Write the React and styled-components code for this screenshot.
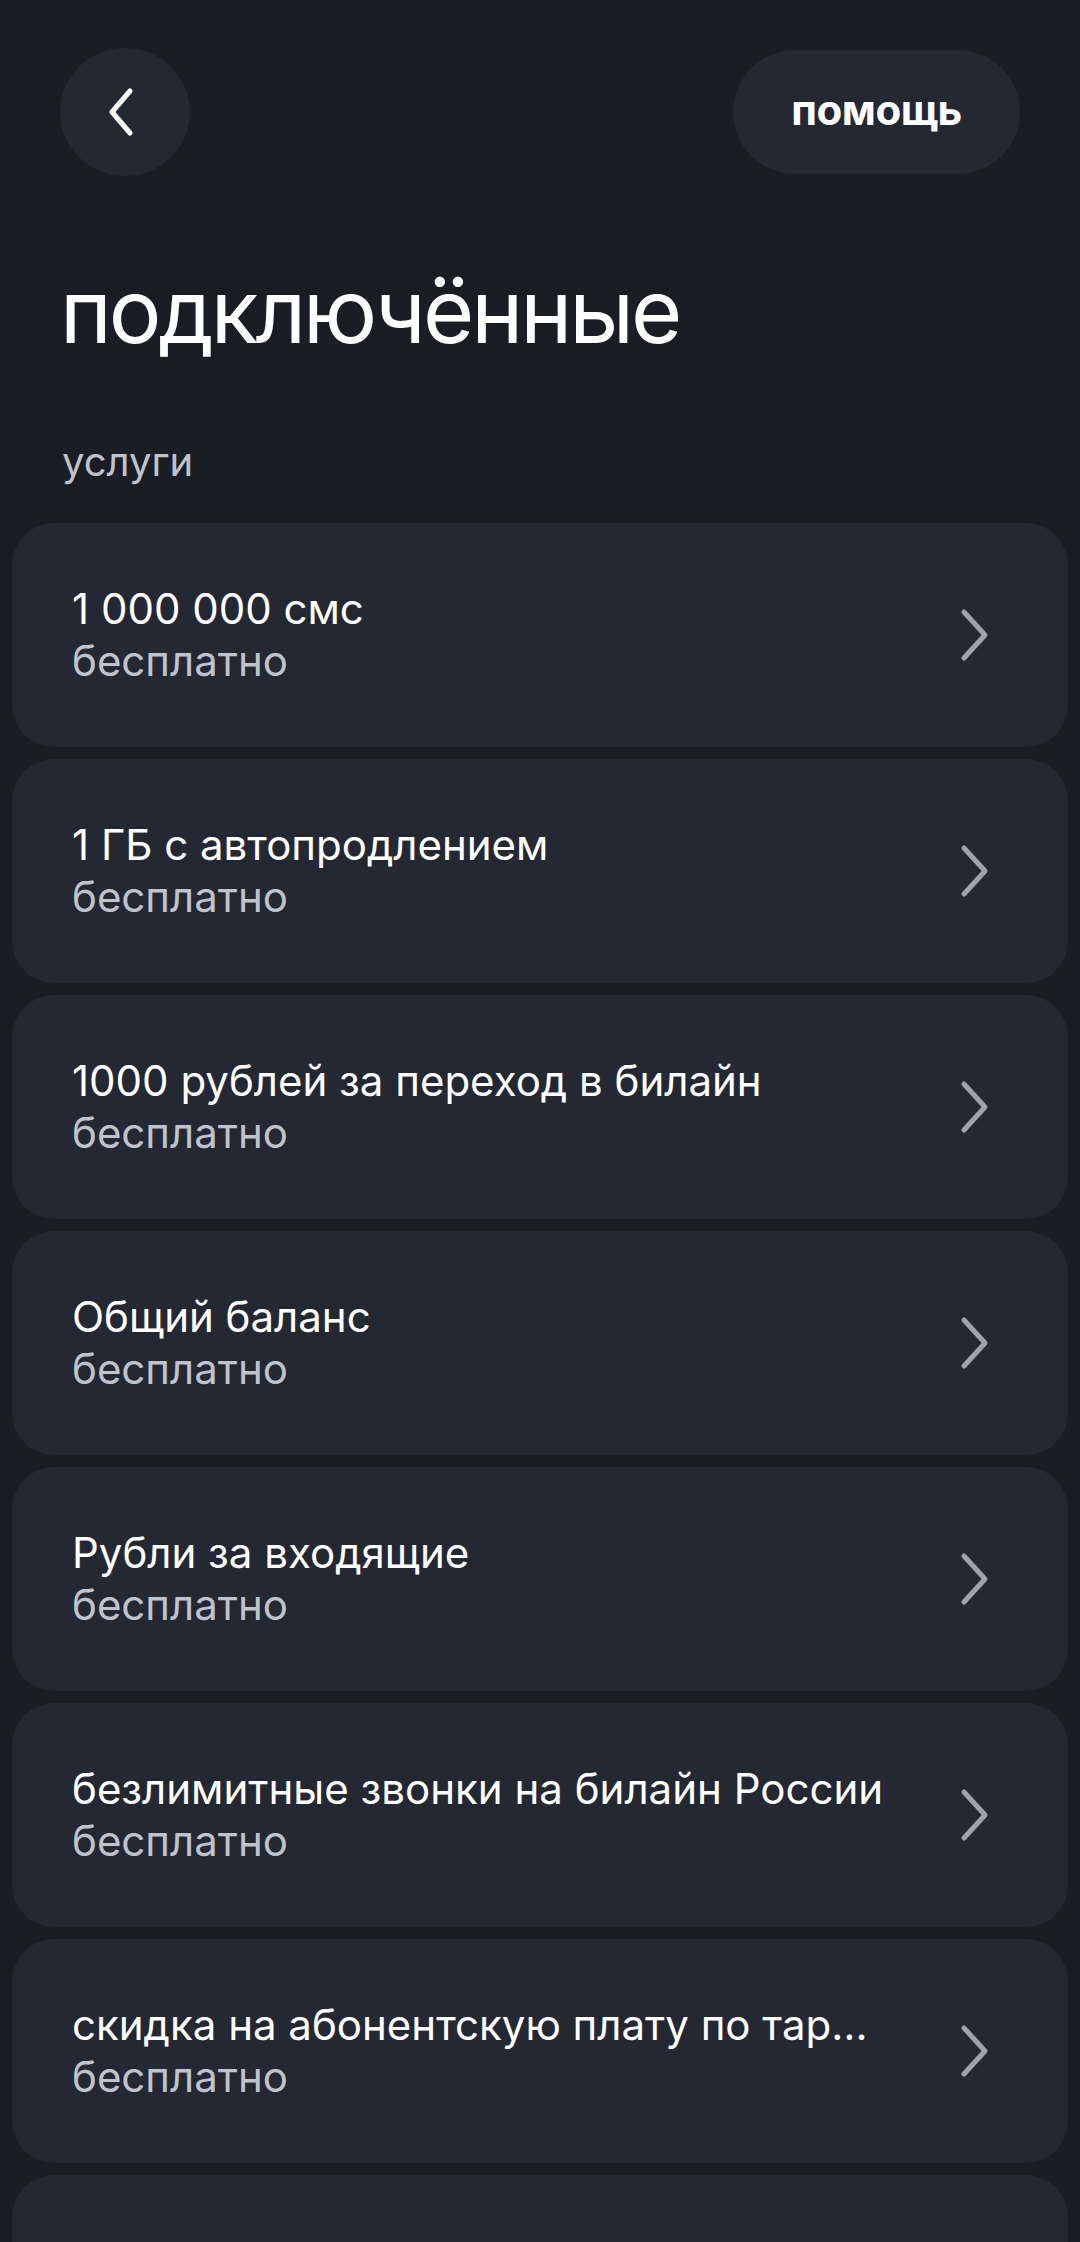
import React from "react";
import styled, { createGlobalStyle } from "styled-components";

const colors = {
  page: "#1a1d23",
  card: "#232833",
  white: "#ffffff",
  muted: "#bfc3cc",
  chevron: "#9ea3ad"
};

const GlobalStyle = createGlobalStyle`
  html, body {
    margin: 0;
    padding: 0;
    background-color: ${colors.page};
  }
  body {
    font-family: Inter, "Noto Sans", sans-serif;
    color: ${colors.white};
    -webkit-font-smoothing: antialiased;
  }
  * {
    box-sizing: border-box;
  }
`;

const Screen = styled.div`
  width: 1080px;
  height: 2242px;
  background-color: ${colors.page};
  overflow: hidden;
`;

const TopBar = styled.header`
  display: flex;
  align-items: center;
  justify-content: space-between;
  height: 128px;
  margin-top: 48px;
  padding: 0 60px;
`;

const RoundButton = styled.button`
  width: 130px;
  height: 128px;
  border: 0;
  border-radius: 50%;
  background-color: ${colors.card};
  display: flex;
  align-items: center;
  justify-content: center;
  padding: 0 6px 0 0;
  cursor: pointer;
`;

const PillButton = styled.button`
  height: 124px;
  width: 287px;
  border: 0;
  border-radius: 62px;
  background-color: ${colors.card};
  color: ${colors.white};
  font-family: Inter, "Noto Sans", sans-serif;
  font-size: 42px;
  font-weight: 700;
  letter-spacing: -0.5px;
  padding: 0 0 6px;
  cursor: pointer;
`;

const Title = styled.h1`
  margin: 80px 0 0;
  padding: 0 60px;
  font-size: 88px;
  font-weight: 400;
  line-height: 110px;
  letter-spacing: -3px;
`;

const SectionLabel = styled.div`
  padding: 0 62px;
  margin-top: 68px;
  font-size: 40px;
  line-height: 56px;
  color: ${colors.muted};
`;

const List = styled.ul`
  list-style: none;
  margin: 33px 0 0;
  padding: 0 12px;
  display: flex;
  flex-direction: column;
  gap: 12px;
`;

const Card = styled.li`
  height: 224px;
  flex-shrink: 0;
  border-radius: 42px;
  background-color: ${colors.card};
  display: flex;
  align-items: center;
  padding: 0 78px 0 60px;
`;

const Texts = styled.div`
  flex: 1;
  min-width: 0;
  padding-right: 68px;
`;

const ItemTitle = styled.div`
  font-size: 42px;
  line-height: 52px;
  color: ${colors.white};
  white-space: nowrap;
  overflow: hidden;
  text-overflow: ellipsis;
`;

const ItemPrice = styled.div`
  font-size: 42px;
  line-height: 52px;
  color: ${colors.muted};
`;

const BackIcon = () => (
  <svg width="30" height="52" viewBox="0 0 30 52" fill="none">
    <polyline
      points="23,5 5,26 23,47"
      stroke="#ffffff"
      strokeWidth="5"
      strokeLinecap="round"
      strokeLinejoin="round"
    />
  </svg>
);

const ChevronIcon = () => (
  <svg width="32" height="56" viewBox="0 0 32 56" fill="none">
    <polyline
      points="6,5 27,28 6,51"
      stroke={colors.chevron}
      strokeWidth="5"
      strokeLinecap="round"
      strokeLinejoin="round"
    />
  </svg>
);

const services = [
  "1 000 000 смс",
  "1 ГБ с автопродлением",
  "1000 рублей за переход в билайн",
  "Общий баланс",
  "Рубли за входящие",
  "безлимитные звонки на билайн России",
  "скидка на абонентскую плату по тарифу",
  "Антиопределитель номера"
];

export default function App() {
  return (
    <Screen>
      <GlobalStyle />
      <TopBar>
        <RoundButton aria-label="Назад">
          <BackIcon />
        </RoundButton>
        <PillButton>помощь</PillButton>
      </TopBar>
      <Title>подключённые</Title>
      <SectionLabel>услуги</SectionLabel>
      <List>
        {services.map(name => (
          <Card key={name}>
            <Texts>
              <ItemTitle>{name}</ItemTitle>
              <ItemPrice>бесплатно</ItemPrice>
            </Texts>
            <ChevronIcon />
          </Card>
        ))}
      </List>
    </Screen>
  );
}
